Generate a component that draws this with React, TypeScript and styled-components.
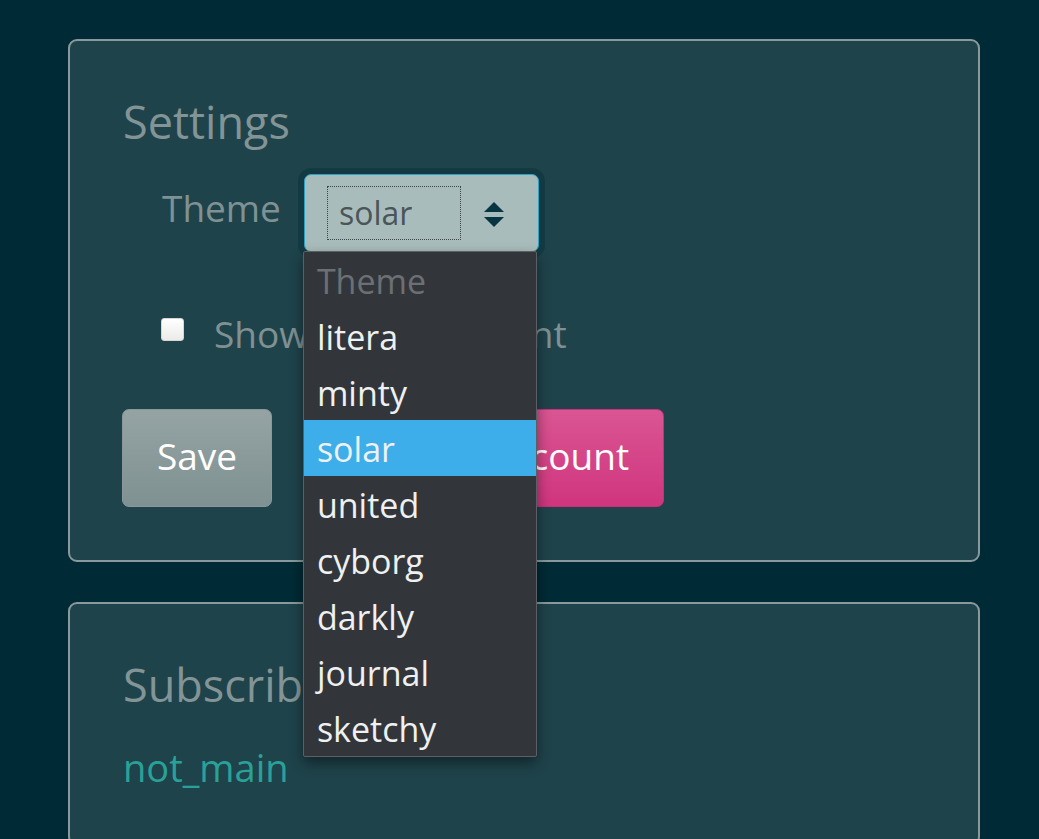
import React from "react";
import styled, { createGlobalStyle } from "styled-components";

const GlobalStyle = createGlobalStyle`
  html, body {
    margin: 0;
    padding: 0;
    overflow: hidden;
    background-color: #002b36;
    font-family: "Open Sans", "Noto Sans", sans-serif;
  }
`;

const Page = styled.div`
  padding: 39px 0 0 68px;
  display: flex;
  flex-direction: column;
  gap: 40px;
`;

const Card = styled.section`
  box-sizing: border-box;
  width: 912px;
  padding: 54px 55px 53px 52px;
  background-color: #1f434b;
  border: 2px solid #889a9b;
  border-radius: 9px;
`;

const Heading = styled.h3`
  margin: 0 0 0 1px;
  font-size: 45px;
  font-weight: 400;
  line-height: 1.2;
  color: #839496;
`;

const FieldRow = styled.div<{ $top: number; $indent: number }>`
  display: flex;
  align-items: center;
  margin-top: ${p => p.$top}px;
  margin-left: ${p => p.$indent}px;
`;

const Label = styled.label`
  font-size: 37px;
  line-height: 1.2;
  color: #7f9193;
  margin-bottom: 9px;
  margin-right: 23px;
`;

const SelectWrap = styled.div`
  position: relative;
`;

const SelectBox = styled.div`
  box-sizing: border-box;
  width: 235px;
  height: 78px;
  display: flex;
  align-items: flex-start;
  padding: 11px 0 0 22px;
  background-color: #a8bdbb;
  border: 1px solid #2aa2c6;
  border-radius: 7px;
  box-shadow: 0 0 0 6px rgba(0, 43, 54, 0.36);
`;

const FocusRing = styled.div`
  box-sizing: border-box;
  width: 134px;
  height: 54px;
  padding-left: 11px;
  border: 1px dotted #3b4447;
  font-size: 32px;
  line-height: 52px;
  color: #4b5559;
`;

const Arrows = styled.svg`
  margin: 16px 0 0 23px;
`;

const Dropdown = styled.ul`
  position: absolute;
  top: 77px;
  left: -1px;
  box-sizing: border-box;
  width: 234px;
  margin: 0;
  padding: 0;
  list-style: none;
  background-color: #32363a;
  border: 1px solid #5c6064;
  border-radius: 2px;
  box-shadow: 0 6px 14px rgba(0, 0, 0, 0.45);
  z-index: 10;
`;

const Option = styled.li<{ $selected?: boolean; $disabled?: boolean }>`
  height: 56px;
  padding-left: 13px;
  font-size: 34px;
  line-height: 58px;
  color: ${p => (p.$disabled ? "#6c7074" : "#eff0f1")};
  background-color: ${p => (p.$selected ? "#3daee9" : "transparent")};
`;

const CheckRow = styled.div`
  display: flex;
  align-items: flex-start;
  margin-top: 60px;
  margin-left: 39px;
`;

const Checkbox = styled.span`
  box-sizing: border-box;
  width: 23px;
  height: 23px;
  margin-top: 6px;
  margin-right: 30px;
  background: linear-gradient(#ffffff, #ecebe9);
  border: 1px solid #d6d6d6;
  border-radius: 3px;
`;

const CheckText = styled.span`
  font-size: 37px;
  line-height: 1.2;
  color: #7f9193;
`;

const ButtonRow = styled.div`
  display: flex;
  gap: 61px;
  margin-top: 53px;
`;

const Button = styled.button<{ $variant: "secondary" | "danger" }>`
  box-sizing: border-box;
  height: 98px;
  display: flex;
  align-items: center;
  padding: 0 34px 4px;
  font-family: inherit;
  font-size: 37px;
  line-height: 1.2;
  color: #ffffff;
  border-radius: 7px;
  border: 1px solid
    ${p => (p.$variant === "secondary" ? "#8a9899" : "#c9307a")};
  background: ${p =>
    p.$variant === "secondary"
      ? "linear-gradient(#95a3a3, #7f9192)"
      : "linear-gradient(#da5593, #d0357e)"};
`;

const Subscription = styled.a`
  display: block;
  margin: 33px 0 0 1px;
  font-size: 38px;
  line-height: 1.2;
  color: #2aa198;
  text-decoration: none;
`;

const themes = ["litera", "minty", "solar", "united", "cyborg", "darkly", "journal", "sketchy"];

export default function App() {
  const current = "solar";

  return (
    <>
      <GlobalStyle />
      <Page>
        <Card>
          <Heading>Settings</Heading>

          <FieldRow $top={25} $indent={40}>
            <Label>Theme</Label>
            <SelectWrap>
              <SelectBox>
                <FocusRing>{current}</FocusRing>
                <Arrows width="20" height="26" viewBox="0 0 20 26">
                  <polygon points="10,0 20,10 0,10" fill="#073642" />
                  <polygon points="0,15 20,15 10,25" fill="#073642" />
                </Arrows>
              </SelectBox>
              <Dropdown>
                <Option $disabled>Theme</Option>
                {themes.map(t => (
                  <Option key={t} $selected={t === current}>
                    {t}
                  </Option>
                ))}
              </Dropdown>
            </SelectWrap>
          </FieldRow>

          <CheckRow>
            <Checkbox />
            <CheckText>Show NSFW Content</CheckText>
          </CheckRow>

          <ButtonRow>
            <Button $variant="secondary">Save</Button>
            <Button $variant="danger">Delete Account</Button>
          </ButtonRow>
        </Card>

        <Card>
          <Heading>Subscribed</Heading>
          <Subscription href="#">not_main</Subscription>
        </Card>
      </Page>
    </>
  );
}
